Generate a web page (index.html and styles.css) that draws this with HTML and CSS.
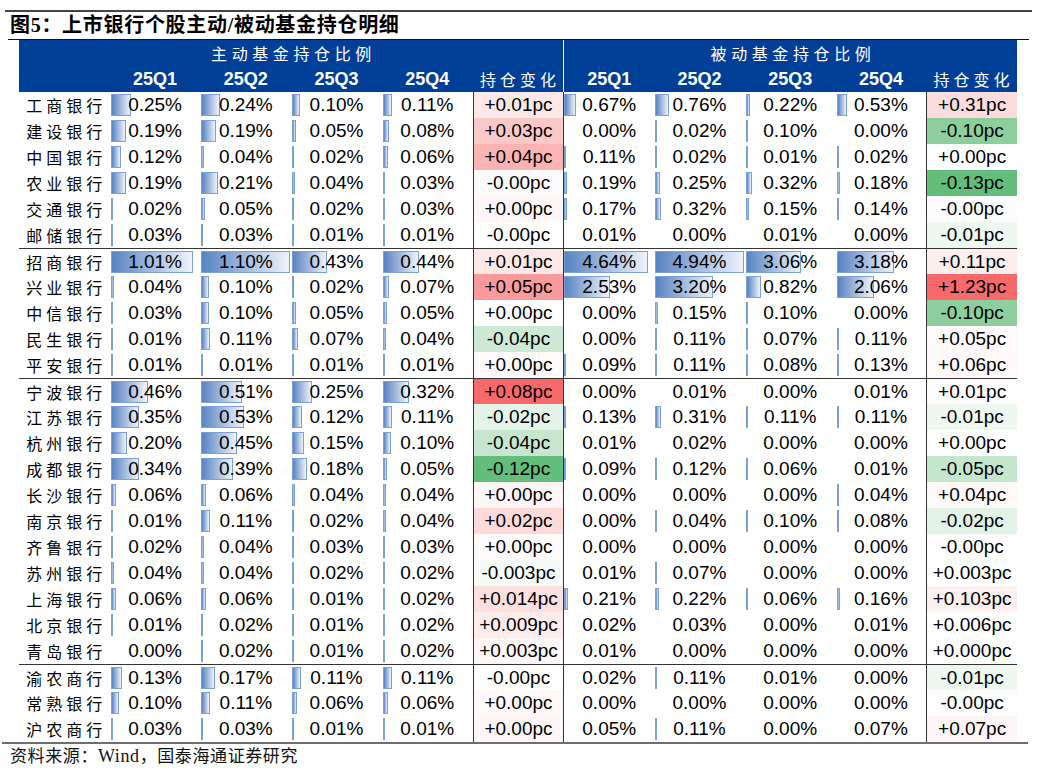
FILE: index.html
```html
<!DOCTYPE html>
<html lang="zh-CN">
<head>
<meta charset="utf-8">
<title>图5：上市银行个股主动/被动基金持仓明细</title>
<link rel="stylesheet" href="styles.css">
</head>
<body>
<div class="top-rule"></div>
<div class="title">图5：上市银行个股主动/被动基金持仓明细</div>
<div class="thin-rule"></div>
<div class="table">
  <div class="hrow head">
    <div class="group-title">主动基金持仓比例</div>
    <div class="group-title passive">被动基金持仓比例</div>
  </div>
  <div class="hrow head">
    <div class="hcell"></div>
    <div class="hcell">25Q1</div>
    <div class="hcell">25Q2</div>
    <div class="hcell">25Q3</div>
    <div class="hcell">25Q4</div>
    <div class="hcell cn">持仓变化</div>
    <div class="hcell hgs">25Q1</div>
    <div class="hcell">25Q2</div>
    <div class="hcell">25Q3</div>
    <div class="hcell">25Q4</div>
    <div class="hcell cn">持仓变化</div>
  </div>

  <div class="row">
    <div class="cell name">工商银行</div>
    <div class="cell"><i class="bar" style="width:20px"></i><span class="v">0.25%</span></div>
    <div class="cell"><i class="bar" style="width:19px"></i><span class="v">0.24%</span></div>
    <div class="cell"><i class="bar" style="width:8px"></i><span class="v">0.10%</span></div>
    <div class="cell"><i class="bar" style="width:9px"></i><span class="v">0.11%</span></div>
    <div class="cell chg" style="background:#fde8e8"><span class="v">+0.01pc</span></div>
    <div class="cell gs"><i class="bar" style="width:12px"></i><span class="v">0.67%</span></div>
    <div class="cell"><i class="bar" style="width:14px"></i><span class="v">0.76%</span></div>
    <div class="cell"><i class="bar" style="width:4px"></i><span class="v">0.22%</span></div>
    <div class="cell"><i class="bar" style="width:10px"></i><span class="v">0.53%</span></div>
    <div class="cell chg" style="background:#fcdcdc"><span class="v">+0.31pc</span></div>
  </div>
  <div class="row">
    <div class="cell name">建设银行</div>
    <div class="cell"><i class="bar" style="width:15px"></i><span class="v">0.19%</span></div>
    <div class="cell"><i class="bar" style="width:15px"></i><span class="v">0.19%</span></div>
    <div class="cell"><i class="bar" style="width:4px"></i><span class="v">0.05%</span></div>
    <div class="cell"><i class="bar" style="width:6px"></i><span class="v">0.08%</span></div>
    <div class="cell chg" style="background:#fbc8c8"><span class="v">+0.03pc</span></div>
    <div class="cell gs"><span class="v">0.00%</span></div>
    <div class="cell"><i class="bar" style="width:2px"></i><span class="v">0.02%</span></div>
    <div class="cell"><i class="bar" style="width:2px"></i><span class="v">0.10%</span></div>
    <div class="cell"><span class="v">0.00%</span></div>
    <div class="cell chg" style="background:#8ccf9d"><span class="v">-0.10pc</span></div>
  </div>
  <div class="row">
    <div class="cell name">中国银行</div>
    <div class="cell"><i class="bar" style="width:10px"></i><span class="v">0.12%</span></div>
    <div class="cell"><i class="bar" style="width:3px"></i><span class="v">0.04%</span></div>
    <div class="cell"><i class="bar" style="width:2px"></i><span class="v">0.02%</span></div>
    <div class="cell"><i class="bar" style="width:5px"></i><span class="v">0.06%</span></div>
    <div class="cell chg" style="background:#fbb3b4"><span class="v">+0.04pc</span></div>
    <div class="cell gs"><i class="bar" style="width:2px"></i><span class="v">0.11%</span></div>
    <div class="cell"><i class="bar" style="width:2px"></i><span class="v">0.02%</span></div>
    <div class="cell"><i class="bar" style="width:2px"></i><span class="v">0.01%</span></div>
    <div class="cell"><i class="bar" style="width:2px"></i><span class="v">0.02%</span></div>
    <div class="cell chg" style="background:#ffffff"><span class="v">+0.00pc</span></div>
  </div>
  <div class="row">
    <div class="cell name">农业银行</div>
    <div class="cell"><i class="bar" style="width:15px"></i><span class="v">0.19%</span></div>
    <div class="cell"><i class="bar" style="width:17px"></i><span class="v">0.21%</span></div>
    <div class="cell"><i class="bar" style="width:3px"></i><span class="v">0.04%</span></div>
    <div class="cell"><i class="bar" style="width:2px"></i><span class="v">0.03%</span></div>
    <div class="cell chg" style="background:#fbfbfb"><span class="v">-0.00pc</span></div>
    <div class="cell gs"><i class="bar" style="width:3px"></i><span class="v">0.19%</span></div>
    <div class="cell"><i class="bar" style="width:5px"></i><span class="v">0.25%</span></div>
    <div class="cell"><i class="bar" style="width:6px"></i><span class="v">0.32%</span></div>
    <div class="cell"><i class="bar" style="width:3px"></i><span class="v">0.18%</span></div>
    <div class="cell chg" style="background:#63be7b"><span class="v">-0.13pc</span></div>
  </div>
  <div class="row">
    <div class="cell name">交通银行</div>
    <div class="cell"><i class="bar" style="width:2px"></i><span class="v">0.02%</span></div>
    <div class="cell"><i class="bar" style="width:4px"></i><span class="v">0.05%</span></div>
    <div class="cell"><i class="bar" style="width:2px"></i><span class="v">0.02%</span></div>
    <div class="cell"><i class="bar" style="width:2px"></i><span class="v">0.03%</span></div>
    <div class="cell chg" style="background:#fef6f6"><span class="v">+0.00pc</span></div>
    <div class="cell gs"><i class="bar" style="width:3px"></i><span class="v">0.17%</span></div>
    <div class="cell"><i class="bar" style="width:6px"></i><span class="v">0.32%</span></div>
    <div class="cell"><i class="bar" style="width:3px"></i><span class="v">0.15%</span></div>
    <div class="cell"><i class="bar" style="width:2px"></i><span class="v">0.14%</span></div>
    <div class="cell chg" style="background:#fbfcfb"><span class="v">-0.00pc</span></div>
  </div>
  <div class="row">
    <div class="cell name">邮储银行</div>
    <div class="cell"><i class="bar" style="width:2px"></i><span class="v">0.03%</span></div>
    <div class="cell"><i class="bar" style="width:2px"></i><span class="v">0.03%</span></div>
    <div class="cell"><i class="bar" style="width:2px"></i><span class="v">0.01%</span></div>
    <div class="cell"><i class="bar" style="width:2px"></i><span class="v">0.01%</span></div>
    <div class="cell chg" style="background:#ffffff"><span class="v">-0.00pc</span></div>
    <div class="cell gs"><span class="v">0.01%</span></div>
    <div class="cell"><span class="v">0.00%</span></div>
    <div class="cell"><span class="v">0.01%</span></div>
    <div class="cell"><span class="v">0.00%</span></div>
    <div class="cell chg" style="background:#eef7f0"><span class="v">-0.01pc</span></div>
  </div>

  <div class="row sep">
    <div class="cell name">招商银行</div>
    <div class="cell"><i class="bar" style="width:82px"></i><span class="v">1.01%</span></div>
    <div class="cell"><i class="bar" style="width:89px"></i><span class="v">1.10%</span></div>
    <div class="cell"><i class="bar" style="width:35px"></i><span class="v">0.43%</span></div>
    <div class="cell"><i class="bar" style="width:36px"></i><span class="v">0.44%</span></div>
    <div class="cell chg" style="background:#fde8e8"><span class="v">+0.01pc</span></div>
    <div class="cell gs"><i class="bar" style="width:84px"></i><span class="v">4.64%</span></div>
    <div class="cell"><i class="bar" style="width:89px"></i><span class="v">4.94%</span></div>
    <div class="cell"><i class="bar" style="width:55px"></i><span class="v">3.06%</span></div>
    <div class="cell"><i class="bar" style="width:57px"></i><span class="v">3.18%</span></div>
    <div class="cell chg" style="background:#fdeeee"><span class="v">+0.11pc</span></div>
  </div>
  <div class="row">
    <div class="cell name">兴业银行</div>
    <div class="cell"><i class="bar" style="width:3px"></i><span class="v">0.04%</span></div>
    <div class="cell"><i class="bar" style="width:8px"></i><span class="v">0.10%</span></div>
    <div class="cell"><i class="bar" style="width:2px"></i><span class="v">0.02%</span></div>
    <div class="cell"><i class="bar" style="width:6px"></i><span class="v">0.07%</span></div>
    <div class="cell chg" style="background:#f99b9c"><span class="v">+0.05pc</span></div>
    <div class="cell gs"><i class="bar" style="width:46px"></i><span class="v">2.53%</span></div>
    <div class="cell"><i class="bar" style="width:58px"></i><span class="v">3.20%</span></div>
    <div class="cell"><i class="bar" style="width:15px"></i><span class="v">0.82%</span></div>
    <div class="cell"><i class="bar" style="width:37px"></i><span class="v">2.06%</span></div>
    <div class="cell chg" style="background:#f8696b"><span class="v">+1.23pc</span></div>
  </div>
  <div class="row">
    <div class="cell name">中信银行</div>
    <div class="cell"><i class="bar" style="width:2px"></i><span class="v">0.03%</span></div>
    <div class="cell"><i class="bar" style="width:8px"></i><span class="v">0.10%</span></div>
    <div class="cell"><i class="bar" style="width:4px"></i><span class="v">0.05%</span></div>
    <div class="cell"><i class="bar" style="width:4px"></i><span class="v">0.05%</span></div>
    <div class="cell chg" style="background:#ffffff"><span class="v">+0.00pc</span></div>
    <div class="cell gs"><span class="v">0.00%</span></div>
    <div class="cell"><i class="bar" style="width:3px"></i><span class="v">0.15%</span></div>
    <div class="cell"><i class="bar" style="width:2px"></i><span class="v">0.10%</span></div>
    <div class="cell"><span class="v">0.00%</span></div>
    <div class="cell chg" style="background:#8ccf9d"><span class="v">-0.10pc</span></div>
  </div>
  <div class="row">
    <div class="cell name">民生银行</div>
    <div class="cell"><i class="bar" style="width:2px"></i><span class="v">0.01%</span></div>
    <div class="cell"><i class="bar" style="width:9px"></i><span class="v">0.11%</span></div>
    <div class="cell"><i class="bar" style="width:6px"></i><span class="v">0.07%</span></div>
    <div class="cell"><i class="bar" style="width:3px"></i><span class="v">0.04%</span></div>
    <div class="cell chg" style="background:#cde9d5"><span class="v">-0.04pc</span></div>
    <div class="cell gs"><span class="v">0.00%</span></div>
    <div class="cell"><i class="bar" style="width:2px"></i><span class="v">0.11%</span></div>
    <div class="cell"><i class="bar" style="width:2px"></i><span class="v">0.07%</span></div>
    <div class="cell"><i class="bar" style="width:2px"></i><span class="v">0.11%</span></div>
    <div class="cell chg" style="background:#fef8f8"><span class="v">+0.05pc</span></div>
  </div>
  <div class="row">
    <div class="cell name">平安银行</div>
    <div class="cell"><i class="bar" style="width:2px"></i><span class="v">0.01%</span></div>
    <div class="cell"><i class="bar" style="width:2px"></i><span class="v">0.01%</span></div>
    <div class="cell"><i class="bar" style="width:2px"></i><span class="v">0.01%</span></div>
    <div class="cell"><i class="bar" style="width:2px"></i><span class="v">0.01%</span></div>
    <div class="cell chg" style="background:#fefafa"><span class="v">+0.00pc</span></div>
    <div class="cell gs"><i class="bar" style="width:2px"></i><span class="v">0.09%</span></div>
    <div class="cell"><i class="bar" style="width:2px"></i><span class="v">0.11%</span></div>
    <div class="cell"><i class="bar" style="width:2px"></i><span class="v">0.08%</span></div>
    <div class="cell"><i class="bar" style="width:2px"></i><span class="v">0.13%</span></div>
    <div class="cell chg" style="background:#fef8f8"><span class="v">+0.06pc</span></div>
  </div>

  <div class="row sep">
    <div class="cell name">宁波银行</div>
    <div class="cell"><i class="bar" style="width:37px"></i><span class="v">0.46%</span></div>
    <div class="cell"><i class="bar" style="width:41px"></i><span class="v">0.51%</span></div>
    <div class="cell"><i class="bar" style="width:20px"></i><span class="v">0.25%</span></div>
    <div class="cell"><i class="bar" style="width:26px"></i><span class="v">0.32%</span></div>
    <div class="cell chg" style="background:#f8696b"><span class="v">+0.08pc</span></div>
    <div class="cell gs"><span class="v">0.00%</span></div>
    <div class="cell"><span class="v">0.01%</span></div>
    <div class="cell"><span class="v">0.00%</span></div>
    <div class="cell"><span class="v">0.01%</span></div>
    <div class="cell chg" style="background:#fefcfc"><span class="v">+0.01pc</span></div>
  </div>
  <div class="row">
    <div class="cell name">江苏银行</div>
    <div class="cell"><i class="bar" style="width:28px"></i><span class="v">0.35%</span></div>
    <div class="cell"><i class="bar" style="width:43px"></i><span class="v">0.53%</span></div>
    <div class="cell"><i class="bar" style="width:10px"></i><span class="v">0.12%</span></div>
    <div class="cell"><i class="bar" style="width:9px"></i><span class="v">0.11%</span></div>
    <div class="cell chg" style="background:#e4f3e8"><span class="v">-0.02pc</span></div>
    <div class="cell gs"><i class="bar" style="width:2px"></i><span class="v">0.13%</span></div>
    <div class="cell"><i class="bar" style="width:6px"></i><span class="v">0.31%</span></div>
    <div class="cell"><i class="bar" style="width:2px"></i><span class="v">0.11%</span></div>
    <div class="cell"><i class="bar" style="width:2px"></i><span class="v">0.11%</span></div>
    <div class="cell chg" style="background:#eef7f0"><span class="v">-0.01pc</span></div>
  </div>
  <div class="row">
    <div class="cell name">杭州银行</div>
    <div class="cell"><i class="bar" style="width:16px"></i><span class="v">0.20%</span></div>
    <div class="cell"><i class="bar" style="width:36px"></i><span class="v">0.45%</span></div>
    <div class="cell"><i class="bar" style="width:12px"></i><span class="v">0.15%</span></div>
    <div class="cell"><i class="bar" style="width:8px"></i><span class="v">0.10%</span></div>
    <div class="cell chg" style="background:#c6e6cf"><span class="v">-0.04pc</span></div>
    <div class="cell gs"><span class="v">0.01%</span></div>
    <div class="cell"><span class="v">0.02%</span></div>
    <div class="cell"><span class="v">0.00%</span></div>
    <div class="cell"><span class="v">0.00%</span></div>
    <div class="cell chg" style="background:#ffffff"><span class="v">+0.00pc</span></div>
  </div>
  <div class="row">
    <div class="cell name">成都银行</div>
    <div class="cell"><i class="bar" style="width:28px"></i><span class="v">0.34%</span></div>
    <div class="cell"><i class="bar" style="width:32px"></i><span class="v">0.39%</span></div>
    <div class="cell"><i class="bar" style="width:15px"></i><span class="v">0.18%</span></div>
    <div class="cell"><i class="bar" style="width:4px"></i><span class="v">0.05%</span></div>
    <div class="cell chg" style="background:#63be7b"><span class="v">-0.12pc</span></div>
    <div class="cell gs"><i class="bar" style="width:2px"></i><span class="v">0.09%</span></div>
    <div class="cell"><i class="bar" style="width:2px"></i><span class="v">0.12%</span></div>
    <div class="cell"><i class="bar" style="width:2px"></i><span class="v">0.06%</span></div>
    <div class="cell"><span class="v">0.01%</span></div>
    <div class="cell chg" style="background:#c4e6cd"><span class="v">-0.05pc</span></div>
  </div>
  <div class="row">
    <div class="cell name">长沙银行</div>
    <div class="cell"><i class="bar" style="width:5px"></i><span class="v">0.06%</span></div>
    <div class="cell"><i class="bar" style="width:5px"></i><span class="v">0.06%</span></div>
    <div class="cell"><i class="bar" style="width:3px"></i><span class="v">0.04%</span></div>
    <div class="cell"><i class="bar" style="width:3px"></i><span class="v">0.04%</span></div>
    <div class="cell chg" style="background:#fef6f6"><span class="v">+0.00pc</span></div>
    <div class="cell gs"><span class="v">0.00%</span></div>
    <div class="cell"><span class="v">0.00%</span></div>
    <div class="cell"><span class="v">0.00%</span></div>
    <div class="cell"><i class="bar" style="width:2px"></i><span class="v">0.04%</span></div>
    <div class="cell chg" style="background:#fef9f9"><span class="v">+0.04pc</span></div>
  </div>
  <div class="row">
    <div class="cell name">南京银行</div>
    <div class="cell"><i class="bar" style="width:2px"></i><span class="v">0.01%</span></div>
    <div class="cell"><i class="bar" style="width:9px"></i><span class="v">0.11%</span></div>
    <div class="cell"><i class="bar" style="width:2px"></i><span class="v">0.02%</span></div>
    <div class="cell"><i class="bar" style="width:3px"></i><span class="v">0.04%</span></div>
    <div class="cell chg" style="background:#fcdada"><span class="v">+0.02pc</span></div>
    <div class="cell gs"><span class="v">0.00%</span></div>
    <div class="cell"><i class="bar" style="width:2px"></i><span class="v">0.04%</span></div>
    <div class="cell"><i class="bar" style="width:2px"></i><span class="v">0.10%</span></div>
    <div class="cell"><i class="bar" style="width:2px"></i><span class="v">0.08%</span></div>
    <div class="cell chg" style="background:#e2f2e6"><span class="v">-0.02pc</span></div>
  </div>
  <div class="row">
    <div class="cell name">齐鲁银行</div>
    <div class="cell"><i class="bar" style="width:2px"></i><span class="v">0.02%</span></div>
    <div class="cell"><i class="bar" style="width:3px"></i><span class="v">0.04%</span></div>
    <div class="cell"><i class="bar" style="width:2px"></i><span class="v">0.03%</span></div>
    <div class="cell"><i class="bar" style="width:2px"></i><span class="v">0.03%</span></div>
    <div class="cell chg" style="background:#fefafa"><span class="v">+0.00pc</span></div>
    <div class="cell gs"><span class="v">0.00%</span></div>
    <div class="cell"><span class="v">0.00%</span></div>
    <div class="cell"><span class="v">0.00%</span></div>
    <div class="cell"><span class="v">0.00%</span></div>
    <div class="cell chg" style="background:#fcfdfc"><span class="v">-0.00pc</span></div>
  </div>
  <div class="row">
    <div class="cell name">苏州银行</div>
    <div class="cell"><i class="bar" style="width:3px"></i><span class="v">0.04%</span></div>
    <div class="cell"><i class="bar" style="width:3px"></i><span class="v">0.04%</span></div>
    <div class="cell"><i class="bar" style="width:2px"></i><span class="v">0.02%</span></div>
    <div class="cell"><i class="bar" style="width:2px"></i><span class="v">0.02%</span></div>
    <div class="cell chg" style="background:#f7fbf8"><span class="v">-0.003pc</span></div>
    <div class="cell gs"><span class="v">0.01%</span></div>
    <div class="cell"><i class="bar" style="width:2px"></i><span class="v">0.07%</span></div>
    <div class="cell"><span class="v">0.00%</span></div>
    <div class="cell"><span class="v">0.00%</span></div>
    <div class="cell chg" style="background:#ffffff"><span class="v">+0.003pc</span></div>
  </div>
  <div class="row">
    <div class="cell name">上海银行</div>
    <div class="cell"><i class="bar" style="width:5px"></i><span class="v">0.06%</span></div>
    <div class="cell"><i class="bar" style="width:5px"></i><span class="v">0.06%</span></div>
    <div class="cell"><i class="bar" style="width:2px"></i><span class="v">0.01%</span></div>
    <div class="cell"><i class="bar" style="width:2px"></i><span class="v">0.02%</span></div>
    <div class="cell chg" style="background:#fce0e0"><span class="v">+0.014pc</span></div>
    <div class="cell gs"><i class="bar" style="width:4px"></i><span class="v">0.21%</span></div>
    <div class="cell"><i class="bar" style="width:4px"></i><span class="v">0.22%</span></div>
    <div class="cell"><i class="bar" style="width:2px"></i><span class="v">0.06%</span></div>
    <div class="cell"><i class="bar" style="width:3px"></i><span class="v">0.16%</span></div>
    <div class="cell chg" style="background:#fdf0f0"><span class="v">+0.103pc</span></div>
  </div>
  <div class="row">
    <div class="cell name">北京银行</div>
    <div class="cell"><i class="bar" style="width:2px"></i><span class="v">0.01%</span></div>
    <div class="cell"><i class="bar" style="width:2px"></i><span class="v">0.02%</span></div>
    <div class="cell"><i class="bar" style="width:2px"></i><span class="v">0.01%</span></div>
    <div class="cell"><i class="bar" style="width:2px"></i><span class="v">0.02%</span></div>
    <div class="cell chg" style="background:#fdecec"><span class="v">+0.009pc</span></div>
    <div class="cell gs"><span class="v">0.02%</span></div>
    <div class="cell"><span class="v">0.03%</span></div>
    <div class="cell"><span class="v">0.00%</span></div>
    <div class="cell"><span class="v">0.01%</span></div>
    <div class="cell chg" style="background:#ffffff"><span class="v">+0.006pc</span></div>
  </div>
  <div class="row">
    <div class="cell name">青岛银行</div>
    <div class="cell"><span class="v">0.00%</span></div>
    <div class="cell"><i class="bar" style="width:2px"></i><span class="v">0.02%</span></div>
    <div class="cell"><i class="bar" style="width:2px"></i><span class="v">0.01%</span></div>
    <div class="cell"><i class="bar" style="width:2px"></i><span class="v">0.02%</span></div>
    <div class="cell chg" style="background:#fef6f6"><span class="v">+0.003pc</span></div>
    <div class="cell gs"><span class="v">0.01%</span></div>
    <div class="cell"><span class="v">0.00%</span></div>
    <div class="cell"><span class="v">0.00%</span></div>
    <div class="cell"><span class="v">0.00%</span></div>
    <div class="cell chg" style="background:#ffffff"><span class="v">+0.000pc</span></div>
  </div>

  <div class="row sep">
    <div class="cell name">渝农商行</div>
    <div class="cell"><i class="bar" style="width:11px"></i><span class="v">0.13%</span></div>
    <div class="cell"><i class="bar" style="width:14px"></i><span class="v">0.17%</span></div>
    <div class="cell"><i class="bar" style="width:9px"></i><span class="v">0.11%</span></div>
    <div class="cell"><i class="bar" style="width:9px"></i><span class="v">0.11%</span></div>
    <div class="cell chg" style="background:#ffffff"><span class="v">-0.00pc</span></div>
    <div class="cell gs"><span class="v">0.02%</span></div>
    <div class="cell"><i class="bar" style="width:2px"></i><span class="v">0.11%</span></div>
    <div class="cell"><span class="v">0.01%</span></div>
    <div class="cell"><span class="v">0.00%</span></div>
    <div class="cell chg" style="background:#eef7f0"><span class="v">-0.01pc</span></div>
  </div>
  <div class="row">
    <div class="cell name">常熟银行</div>
    <div class="cell"><i class="bar" style="width:8px"></i><span class="v">0.10%</span></div>
    <div class="cell"><i class="bar" style="width:9px"></i><span class="v">0.11%</span></div>
    <div class="cell"><i class="bar" style="width:5px"></i><span class="v">0.06%</span></div>
    <div class="cell"><i class="bar" style="width:5px"></i><span class="v">0.06%</span></div>
    <div class="cell chg" style="background:#fef8f8"><span class="v">+0.00pc</span></div>
    <div class="cell gs"><span class="v">0.00%</span></div>
    <div class="cell"><span class="v">0.00%</span></div>
    <div class="cell"><span class="v">0.00%</span></div>
    <div class="cell"><span class="v">0.00%</span></div>
    <div class="cell chg" style="background:#fcfdfc"><span class="v">-0.00pc</span></div>
  </div>
  <div class="row">
    <div class="cell name">沪农商行</div>
    <div class="cell"><i class="bar" style="width:2px"></i><span class="v">0.03%</span></div>
    <div class="cell"><i class="bar" style="width:2px"></i><span class="v">0.03%</span></div>
    <div class="cell"><i class="bar" style="width:2px"></i><span class="v">0.01%</span></div>
    <div class="cell"><i class="bar" style="width:2px"></i><span class="v">0.01%</span></div>
    <div class="cell chg" style="background:#fef6f6"><span class="v">+0.00pc</span></div>
    <div class="cell gs"><span class="v">0.05%</span></div>
    <div class="cell"><i class="bar" style="width:2px"></i><span class="v">0.11%</span></div>
    <div class="cell"><span class="v">0.00%</span></div>
    <div class="cell"><span class="v">0.07%</span></div>
    <div class="cell chg" style="background:#fef6f6"><span class="v">+0.07pc</span></div>
  </div>
</div>
<div class="bottom-rule"></div>
<div class="source">资料来源：<span class="latin">Wind</span>，国泰海通证券研究</div>
</body>
</html>
```

FILE: styles.css
```css
* {
  box-sizing: border-box;
  margin: 0;
  padding: 0;
}

body {
  width: 1037px;
  height: 770px;
  overflow: hidden;
  background: #ffffff;
  color: #000000;
  font-family: "Liberation Sans", "Noto Sans CJK SC", sans-serif;
}

.top-rule {
  margin: 10px 0 0 5px;
  width: 1027px;
  height: 2px;
  background: #444444;
}

.title {
  height: 27px;
  line-height: 27px;
  padding-left: 10px;
  font-family: "Liberation Serif", "Noto Sans CJK SC", serif;
  font-weight: 700;
  font-size: 20px;
  letter-spacing: 0.7px;
  white-space: nowrap;
}

.thin-rule {
  margin-left: 8px;
  width: 1021px;
  height: 1px;
  background: #111111;
}

.table {
  margin-left: 19px;
  width: 998px;
}

.hrow,
.row {
  display: grid;
  grid-template-columns: repeat(11, 1fr);
  height: 26px;
}

.head {
  background: #003f98;
  color: #ffffff;
}

.group-title {
  grid-column: span 6;
  text-align: center;
  font-family: "Noto Sans CJK SC", sans-serif;
  font-size: 16px;
  letter-spacing: 4.6px;
  padding-left: 4.6px;
  line-height: 26px;
}

.group-title.passive {
  grid-column: span 5;
  border-left: 1px solid #ffffff;
}

.hcell {
  text-align: center;
  font-weight: 700;
  font-size: 18px;
  line-height: 26px;
}

.hcell.cn {
  font-family: "Noto Sans CJK SC", sans-serif;
  font-weight: 400;
  font-size: 16px;
  letter-spacing: 4px;
  padding-left: 4px;
}

.hcell.hgs {
  border-left: 1px solid #ffffff;
}

.row.sep {
  border-top: 1px solid #333333;
}

.cell {
  position: relative;
  text-align: center;
  font-size: 19px;
  line-height: 26px;
  white-space: nowrap;
}

.cell .v {
  position: relative;
}

.name {
  font-family: "Noto Sans CJK SC", sans-serif;
  font-size: 16px;
  letter-spacing: 4px;
  padding-left: 4px;
}

.bar {
  position: absolute;
  left: 1px;
  top: 2px;
  height: 22px;
  border: 1px solid #7b9fd7;
  background: linear-gradient(to right, #5883c3, #eef3fa);
}

.chg,
.gs {
  border-left: 1px solid #333333;
}

.gs .bar {
  left: 0;
}

.bottom-rule {
  margin-left: 2px;
  width: 1026px;
  height: 2px;
  background: #6e6e6e;
}

.source {
  padding-left: 10px;
  height: 22px;
  line-height: 22px;
  font-family: "Noto Sans CJK SC", sans-serif;
  font-size: 17px;
  letter-spacing: 0.6px;
  color: #111111;
}

.source .latin {
  font-family: "Liberation Serif", serif;
  font-size: 18px;
}
```
